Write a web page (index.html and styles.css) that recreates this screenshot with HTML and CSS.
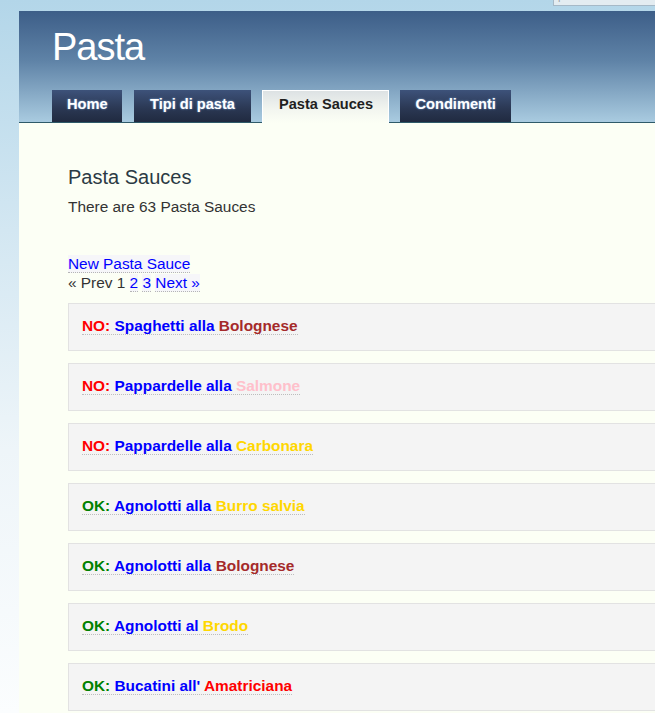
FILE: index.html
```html
<!DOCTYPE html>
<html lang="it">
<head>
<meta charset="utf-8">
<title>Pasta Sauces</title>
<link rel="stylesheet" href="styles.css">
</head>
<body>
<div class="search"><span class="search-text">pasta sauces search</span></div>
<div class="page">
  <header class="masthead">
    <h1 class="site-title">Pasta</h1>
    <nav class="tabs">
      <a class="tab" href="#">Home</a>
      <a class="tab" href="#">Tipi di pasta</a>
      <a class="tab tab-active" href="#">Pasta Sauces</a>
      <a class="tab" href="#">Condimenti</a>
    </nav>
  </header>
  <main class="content">
    <h2 class="page-title">Pasta Sauces</h2>
    <p class="count">There are 63 Pasta Sauces</p>
    <div class="actions">
      <a class="link" href="#">New Pasta Sauce</a><br>
      &laquo; Prev 1 <a class="link" href="#">2</a> <a class="link" href="#">3</a> <a class="link" href="#">Next &raquo;</a>
    </div>
    <ul class="sauces">
      <li class="sauce"><a class="sauce-link" href="#"><span class="st-no">NO:</span> <span class="pasta">Spaghetti alla</span> <span class="c-brown">Bolognese</span></a></li>
      <li class="sauce"><a class="sauce-link" href="#"><span class="st-no">NO:</span> <span class="pasta">Pappardelle alla</span> <span class="c-pink">Salmone</span></a></li>
      <li class="sauce"><a class="sauce-link" href="#"><span class="st-no">NO:</span> <span class="pasta">Pappardelle alla</span> <span class="c-gold">Carbonara</span></a></li>
      <li class="sauce"><a class="sauce-link" href="#"><span class="st-ok">OK:</span> <span class="pasta">Agnolotti alla</span> <span class="c-gold">Burro salvia</span></a></li>
      <li class="sauce"><a class="sauce-link" href="#"><span class="st-ok">OK:</span> <span class="pasta">Agnolotti alla</span> <span class="c-brown">Bolognese</span></a></li>
      <li class="sauce"><a class="sauce-link" href="#"><span class="st-ok">OK:</span> <span class="pasta">Agnolotti al</span> <span class="c-gold">Brodo</span></a></li>
      <li class="sauce"><a class="sauce-link" href="#"><span class="st-ok">OK:</span> <span class="pasta">Bucatini all'</span> <span class="c-red">Amatriciana</span></a></li>
    </ul>
  </main>
</div>
</body>
</html>
```
FILE: styles.css
```css
html {
  overflow: hidden;
}
body {
  margin: 0;
  font-family: "Liberation Sans", Arial, sans-serif;
  background: #ffffff linear-gradient(to bottom, #b3d6e9 0px, #d3e7f2 230px, #eef5f9 450px, #fbfdfe 713px) no-repeat;
  background-size: 100% 713px;
  min-height: 713px;
  position: relative;
}
.search {
  position: absolute;
  left: 553px;
  top: -14px;
  width: 130px;
  height: 18px;
  border: 1px solid #a6b9c7;
  background: #e3ecf1;
  overflow: hidden;
}
.search-text {
  display: block;
  margin: 3px 0 0 4px;
  font-size: 11px;
  line-height: 13px;
  color: #9aa2a8;
  border-bottom: 1px dotted #8f9aa3;
  width: 100px;
}
.page {
  margin: 11px 0 0 19px;
  background: #fcfff5;
  overflow: hidden;
  height: 702px;
}
.masthead {
  height: 111px;
  border-bottom: 1px solid #2e5a69;
  background: linear-gradient(to bottom, #3d5e88 0%, #5f83a7 45%, #a9cbe0 100%);
  display: flex;
  flex-direction: column;
  padding-left: 33px;
}
.site-title {
  margin: 0;
  padding-top: 14px;
  font-size: 38px;
  line-height: 44px;
  font-weight: normal;
  letter-spacing: -1px;
  color: #ffffff;
}
.tabs {
  margin-top: auto;
  display: flex;
  align-items: flex-end;
  gap: 11px;
}
.tab {
  display: block;
  padding: 6px 16px 10px;
  font-size: 14.6px;
  line-height: 16px;
  font-weight: bold;
  color: #ffffff;
  text-decoration: none;
  background: linear-gradient(to bottom, #3d527a 0%, #2a3752 60%, #202a40 100%);
  text-shadow: 0 0 2px rgba(140, 185, 235, 0.9);
}
.tab:first-child {
  margin-right: 1px;
  padding-left: 15px;
  padding-right: 14.5px;
}
.tab:last-child {
  padding-left: 15.5px;
  padding-right: 15.5px;
}
.tab-active {
  position: relative;
  margin-bottom: -1px;
  padding: 5px 15px 11px 16px;
  border: 1px solid #ffffff;
  border-bottom: 0;
  color: #1f1f1f;
  background: linear-gradient(to bottom, #dde2e4 0%, #f3f6f0 60%, #fcfff5 100%);
  text-shadow: none;
}
.content {
  padding: 42px 0 20px 49px;
}
.page-title {
  margin: 0 0 9px;
  font-size: 20px;
  line-height: 24px;
  font-weight: normal;
  color: #2b3a44;
}
.count {
  margin: 0;
  font-size: 15.4px;
  line-height: 18px;
  color: #333333;
}
.actions {
  margin-top: 38px;
  font-size: 15.4px;
  line-height: 19.4px;
  color: #333333;
}
.link {
  color: #0000ff;
  text-decoration: none;
  background: #f6f6f9;
  border-bottom: 1px dotted #b5b5b5;
}
.sauces {
  list-style: none;
  margin: 10px 0 0;
  padding: 0;
}
.sauce {
  margin-bottom: 12px;
  padding: 13px 14px 15px 13px;
  background: #f4f4f4;
  border: 1px solid #e2e2e2;
  border-right: 0;
  font-size: 15.4px;
  line-height: 18px;
  font-weight: bold;
}
.sauce-link {
  text-decoration: none;
  border-bottom: 1px dotted #bdbdbd;
}
.st-no { color: #ff0000; }
.st-ok { color: #008000; }
.pasta { color: #0000ff; }
.c-brown { color: #a52a2a; }
.c-pink { color: #ffc0cb; }
.c-gold { color: #ffd700; }
.c-red { color: #ff0000; }
```
